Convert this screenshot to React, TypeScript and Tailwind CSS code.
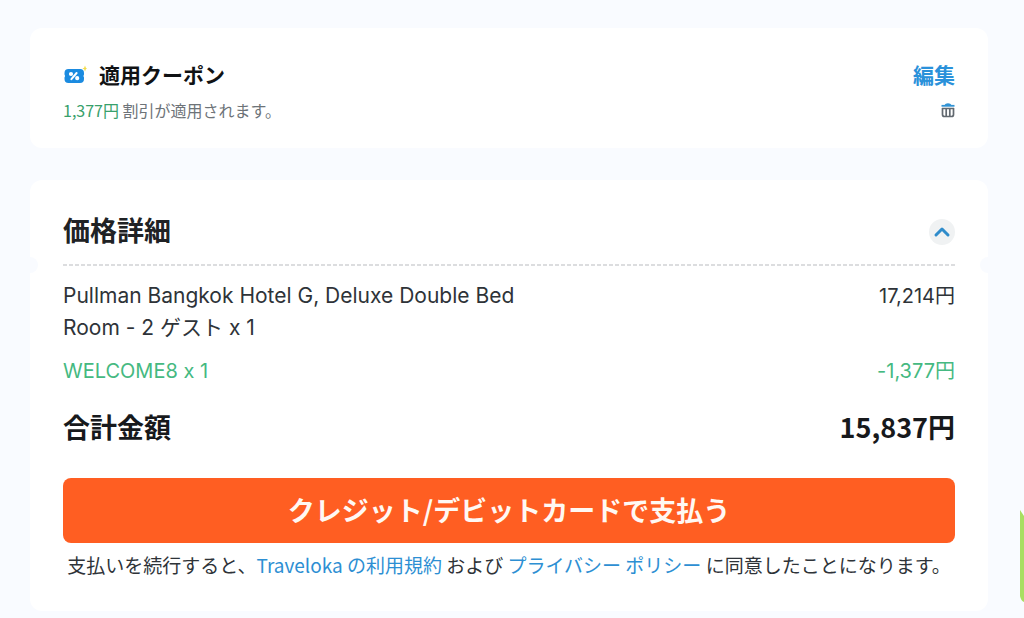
import { ChevronUp } from "lucide-react";

function CouponIcon() {
  return (
    <svg aria-hidden="true" viewBox="0 0 24 24" className="size-6 shrink-0">
      <path
        d="M5.500 5H17a4 4 0 0 1 4 4v1.500l-.6 1.500.6 1.500V15a4 4 0 0 1-4 4H5.500a4 4 0 0 1-4-4v-1.500l.6-1.500-.6-1.500V9a4 4 0 0 1 4-4Z"
        fill="#1b8be0"
      />
      <g fill="none" stroke="#fff" strokeWidth="2" strokeLinecap="round">
        <circle cx="8" cy="10" r="1.100" />
        <circle cx="14.200" cy="14.200" r="1.100" />
        <path d="m13.600 9-5.200 6.200" />
      </g>
      <path d="m22 1.500.8 2.200 1.200.8-1.200.8-.8 2.200-.8-2.200-1.700-.8 1.700-.8Z" fill="#f2dc4a" />
    </svg>
  );
}

function TrashIcon() {
  return (
    <svg aria-hidden="true" viewBox="0 0 14 16" className="h-4 w-3.5" fill="none">
      <path d="M1.500 6v6.500a2 2 0 0 0 2 2h7a2 2 0 0 0 2-2V6M5.200 6v8M8.800 6v8M1 6.500h12" stroke="#626970" strokeWidth="1.700" />
      <path d="M.5 3.800h13" stroke="#3193d4" strokeWidth="1.800" />
      <path d="M3.500 3.500C4.200.4 9.800.4 10.500 3.500Z" fill="#3193d4" />
    </svg>
  );
}

export default function App() {
  return (
    <div
      lang="ja"
      className="relative min-h-screen overflow-hidden bg-[#f9fbff] pt-7 pr-9 pb-1 pl-[30px] font-['Inter','Noto_Sans_CJK_JP',sans-serif] text-[#2e3338] [font-feature-settings:'calt'_0]"
    >
      <main className="flex flex-col gap-8">
        <section className="rounded-xl bg-white px-[33px] pt-8 pb-[26px]">
          <div className="flex h-8 items-center justify-between">
            <div className="flex items-center gap-3">
              <CouponIcon />
              <h2 className="text-[21px] font-bold text-[#101214]">適用クーポン</h2>
            </div>
            <a href="#edit" className="text-[21px] font-bold text-[#2a91da]">
              編集
            </a>
          </div>
          <div className="mt-[6px] flex h-6 items-center justify-between">
            <p className="font-['Noto_Sans_CJK_JP',sans-serif] text-[16px] leading-6 text-[#6d7378]">
              <span className="text-[#38a06b]">1,377円</span> 割引が適用されます。
            </p>
            <button type="button" aria-label="クーポンを削除">
              <TrashIcon />
            </button>
          </div>
        </section>

        <section className="relative rounded-xl bg-white px-[33px] pt-8 pb-[30px]">
          <span className="absolute top-[77px] -left-2 size-4 rounded-full bg-[#f9fbff]" />
          <span className="absolute top-[77px] -right-2 size-4 rounded-full bg-[#f9fbff]" />
          <div className="flex h-10 items-center justify-between">
            <h2 className="text-[27px] font-bold text-[#202225]">価格詳細</h2>
            <button
              type="button"
              aria-label="価格詳細を閉じる"
              className="flex size-[26px] items-center justify-center rounded-full bg-[#f0f2f3] text-[#2f8ccb]"
            >
              <ChevronUp size={24} strokeWidth={3} />
            </button>
          </div>
          <svg aria-hidden="true" className="mt-3 block h-[2px] w-full">
            <line x1="0" y1="1" x2="100%" y2="1" stroke="#dcdddf" strokeWidth="2" strokeDasharray="4 2" />
          </svg>

          <dl>
            <div className="mt-[14px] flex items-start justify-between text-[21px] leading-8">
              <dt className="max-w-[480px]">Pullman Bangkok Hotel G, Deluxe Double Bed Room - 2 ゲスト x 1</dt>
              <dd className="text-[20px] leading-8">17,214円</dd>
            </div>
            <div className="mt-[11px] flex items-center justify-between text-[20px] leading-8 text-[#45b981]">
              <dt>WELCOME8 x 1</dt>
              <dd>-1,377円</dd>
            </div>
            <div className="mt-5 flex items-center justify-between font-['Noto_Sans_CJK_JP',sans-serif] text-[27px] leading-10 font-bold text-[#17191c]">
              <dt>合計金額</dt>
              <dd>15,837円</dd>
            </div>
          </dl>

          <button
            type="button"
            className="mt-[31px] flex h-[65px] w-full items-center justify-center rounded-lg bg-[#ff5e22] font-['Noto_Sans_CJK_JP',sans-serif] text-[27px] font-bold text-[#fff8f3]"
          >
            クレジット/デビットカードで支払う
          </button>
          <p className="mt-[6px] text-center font-['Noto_Sans_CJK_JP',sans-serif] text-[19px] leading-8">
            支払いを続行すると、
            <a href="#terms" className="text-[#2d8fd3]">
              Traveloka の利用規約
            </a>{" "}
            および{" "}
            <a href="#privacy" className="text-[#2d8fd3]">
              プライバシー ポリシー
            </a>{" "}
            に同意したことになります。
          </p>
        </section>
      </main>
      <svg
        aria-hidden="true"
        viewBox="0 0 4 92"
        className="absolute right-0 bottom-4 h-[92px] w-1"
        preserveAspectRatio="none"
      >
        <path d="M0 0 4 6V92Q1 91 0 86Z" fill="#a8df62" />
      </svg>
    </div>
  );
}
